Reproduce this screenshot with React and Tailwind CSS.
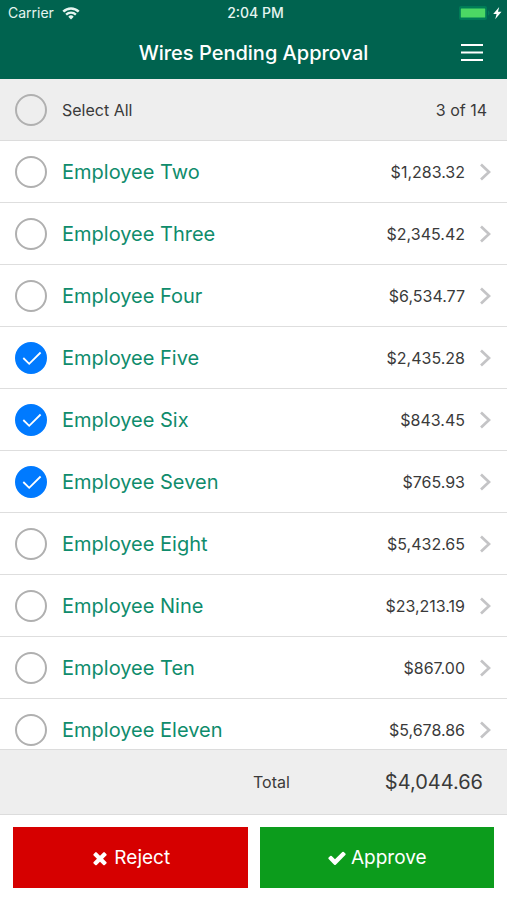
import { useState } from 'react'

const TOTAL_COUNT = 14

const initialWires = [
  { id: 2, name: 'Employee Two', amount: 1283.32, selected: false },
  { id: 3, name: 'Employee Three', amount: 2345.42, selected: false },
  { id: 4, name: 'Employee Four', amount: 6534.77, selected: false },
  { id: 5, name: 'Employee Five', amount: 2435.28, selected: true },
  { id: 6, name: 'Employee Six', amount: 843.45, selected: true },
  { id: 7, name: 'Employee Seven', amount: 765.93, selected: true },
  { id: 8, name: 'Employee Eight', amount: 5432.65, selected: false },
  { id: 9, name: 'Employee Nine', amount: 23213.19, selected: false },
  { id: 10, name: 'Employee Ten', amount: 867, selected: false },
  { id: 11, name: 'Employee Eleven', amount: 5678.86, selected: false },
]

const formatAmount = (value) =>
  value.toLocaleString('en-US', { style: 'currency', currency: 'USD' })

const WifiIcon = () => (
  <svg viewBox="0 0 18 13" className="w-[18px] h-[13px]" fill="none" aria-hidden="true">
    <path d="M1.3 4.6a11 11 0 0 1 15.4 0" stroke="currentColor" strokeWidth="2.6" />
    <path d="M4.1 7.6a7 7 0 0 1 9.8 0" stroke="currentColor" strokeWidth="2.3" />
    <path d="M9 12.4 6.3 9.7a3.8 3.8 0 0 1 5.4 0z" fill="currentColor" />
  </svg>
)

const BatteryIcon = () => (
  <svg viewBox="0 0 44 14" className="w-11 h-3.5" aria-hidden="true">
    <rect x="0" y="0" width="28" height="14" rx="2" fill="#007c57" />
    <path d="M29 4.5c2 .6 2 4.4 0 5z" fill="#007c57" />
    <rect x="1.8" y="2.4" width="24.4" height="9" rx="0.5" fill="#4cd964" />
    <path d="M40.2 1 34.2 8h3.4L36.2 13.3l6.3-7.500H39z" fill="white" />
  </svg>
)

const TimesIcon = () => (
  <svg viewBox="0 0 1792 1792" className="w-5 h-5" fill="currentColor" aria-hidden="true">
    <path d="M1490 1322q0 40-28 68l-136 136q-28 28-68 28t-68-28l-294-294-294 294q-28 28-68 28t-68-28l-136-136q-28-28-28-68t28-68l294-294-294-294q-28-28-28-68t28-68l136-136q28-28 68-28t68 28l294 294 294-294q28-28 68-28t68 28l136 136q28 28 28 68t-28 68l-294 294 294 294q28 28 28 68z" />
  </svg>
)

const CheckIcon = () => (
  <svg viewBox="0 0 1792 1792" className="w-5 h-5" fill="currentColor" aria-hidden="true">
    <path d="M1671 566q0 40-28 68l-724 724-136 136q-28 28-68 28t-68-28l-136-136-362-362q-28-28-28-68t28-68l136-136q28-28 68-28t68 28l294 295 656-657q28-28 68-28t68 28l136 136q28 28 28 68z" />
  </svg>
)

const RoundCheckbox = ({ id, checked, onChange }) => (
  <span className="grid shrink-0 place-items-center">
    <input
      id={id}
      type="checkbox"
      checked={checked}
      onChange={onChange}
      className="col-start-1 row-start-1 w-8 h-8 appearance-none rounded-full border-2 border-[#b0b0b0] checked:border-[#007aff] checked:bg-[#007aff]"
    />
    {checked && (
      <svg
        viewBox="0 0 32 32"
        className="pointer-events-none col-start-1 row-start-1 w-8 h-8"
        fill="none"
        aria-hidden="true"
      >
        <path d="M8.3 16l5.9 5.800L25.600 10.500" stroke="white" strokeWidth="1.800" />
      </svg>
    )}
  </span>
)

const WireRow = ({ wire, onToggle }) => (
  <li className="flex h-[62px] items-center border-b border-[#dedede] pl-[15px] pr-4">
    <RoundCheckbox id={`wire-${wire.id}`} checked={wire.selected} onChange={onToggle} />
    <label htmlFor={`wire-${wire.id}`} className="ml-[15px] flex-1 text-xl text-[#0f8c6c]">
      {wire.name}
    </label>
    <span className="text-base text-[#3a3a3a]">{formatAmount(wire.amount)}</span>
    <button type="button" aria-label={`Open ${wire.name}`} className="ml-3.5">
      <svg viewBox="0 0 12 18" className="block w-3 h-[18px]" fill="none" aria-hidden="true">
        <path d="M2 1.500 10 9l-8 7.500" stroke="#c4c4c6" strokeWidth="2.700" />
      </svg>
    </button>
  </li>
)

const App = () => {
  const [wires, setWires] = useState(initialWires)

  const selected = wires.filter((w) => w.selected)
  const total = selected.reduce((sum, w) => sum + w.amount, 0)
  const allSelected = selected.length === wires.length

  const toggleWire = (id) => {
    setWires((prev) => prev.map((w) => (w.id === id ? { ...w, selected: !w.selected } : w)))
  }

  const toggleAll = () => {
    setWires((prev) => prev.map((w) => ({ ...w, selected: !allSelected })))
  }

  return (
    <div className="flex h-screen flex-col bg-white font-['Inter',sans-serif] text-[#3a3a3a]">
      <header className="bg-[#00634f] text-white">
        {/* Status bar */}
        <div className="grid h-[26px] grid-cols-3 items-center pl-2 pr-1 text-sm text-[#e6f5f0]">
          <div className="flex items-center gap-2">
            <span>Carrier</span>
            <WifiIcon />
          </div>
          <span className="text-center font-medium">2:04 PM</span>
          <div className="flex justify-end">
            <BatteryIcon />
          </div>
        </div>

        <div className="grid h-[53px] grid-cols-[1fr_auto_1fr] items-center px-6">
          <h1 className="col-start-2 text-xl font-medium">Wires Pending Approval</h1>
          <button type="button" aria-label="Menu" className="justify-self-end">
            <svg viewBox="0 0 22 18" className="block w-[22px] h-[18px]" aria-hidden="true">
              <path d="M0 1h22M0 8.500h22M0 16h22" stroke="white" strokeWidth="2" />
            </svg>
          </button>
        </div>
      </header>

      <div className="flex h-[62px] shrink-0 items-center border-b border-[#dcdcdc] bg-[#eeeeee] pl-[15px] pr-5 text-base">
        <RoundCheckbox id="select-all" checked={allSelected} onChange={toggleAll} />
        <label htmlFor="select-all" className="ml-[15px] flex-1">
          Select All
        </label>
        <span>
          {selected.length} of {TOTAL_COUNT}
        </span>
      </div>

      <ul className="min-h-0 flex-1 overflow-y-auto [scrollbar-width:none]">
        {wires.map((wire) => (
          <WireRow key={wire.id} wire={wire} onToggle={() => toggleWire(wire.id)} />
        ))}
      </ul>

      <div className="grid h-[66px] shrink-0 grid-cols-[3fr_2fr] items-center border-y border-[#dcdcdc] bg-[#eeeeee] pr-6">
        <span className="justify-self-end text-base">Total</span>
        <span className="justify-self-end text-xl">{formatAmount(total)}</span>
      </div>

      <div className="grid shrink-0 grid-cols-2 gap-3 px-[13px] py-3 text-[19px]/7 text-white">
        <button type="button" className="flex h-[61px] items-center justify-center gap-1 bg-[#d60000]">
          <TimesIcon />
          Reject
        </button>
        <button type="button" className="flex h-[61px] items-center justify-center gap-1 bg-[#0c9c1c]">
          <CheckIcon />
          Approve
        </button>
      </div>
    </div>
  )
}

export default App
